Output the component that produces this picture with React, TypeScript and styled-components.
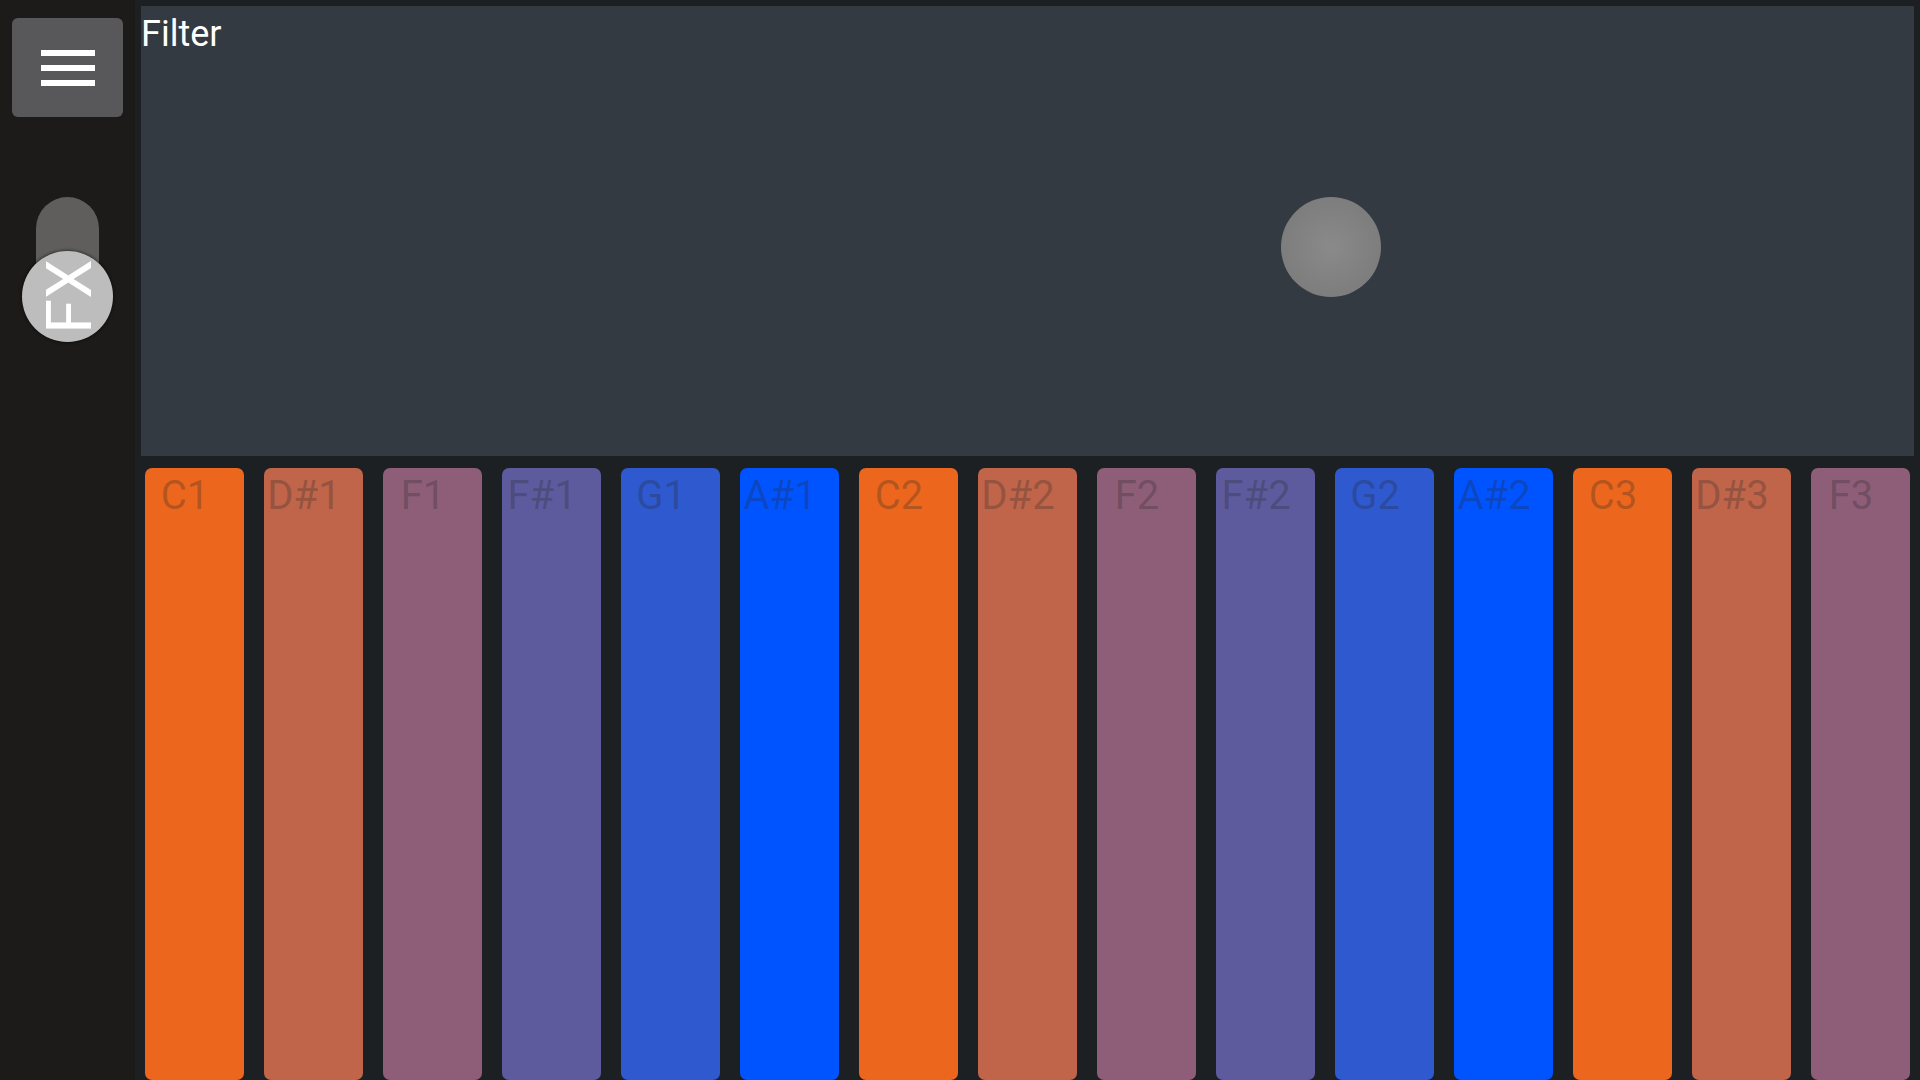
import React from "react";
import styled, { createGlobalStyle } from "styled-components";

const GlobalStyle = createGlobalStyle`
  html, body {
    margin: 0;
    padding: 0;
    background: #1c2023;
    overflow: hidden;
  }
  #root {
    width: 1920px;
    height: 1080px;
  }
  * { box-sizing: border-box; }
`;

const Shell = styled.div`
  display: flex;
  width: 1920px;
  height: 1080px;
  font-family: Roboto, "Noto Sans", "Liberation Sans", sans-serif;
`;

const Sidebar = styled.aside`
  width: 135px;
  flex: 0 0 135px;
  background: #1c1b19;
  display: flex;
  flex-direction: column;
  align-items: center;
  padding-top: 18px;
`;

const MenuButton = styled.button`
  width: 111px;
  height: 99px;
  border: none;
  border-radius: 6px;
  background: #58585a;
  display: flex;
  flex-direction: column;
  align-items: center;
  justify-content: center;
  gap: 9px;
  padding: 0;
  cursor: pointer;
`;

const MenuBar = styled.span`
  display: block;
  width: 54px;
  height: 6px;
  background: #ffffff;
`;

const FxSlider = styled.div`
  position: relative;
  width: 91px;
  height: 144px;
  margin-top: 80px;
  display: flex;
  justify-content: center;
`;

const FxTrack = styled.div`
  width: 63px;
  height: 98px;
  background: #5f5e5d;
  border-radius: 32px 32px 0 0;
`;

const FxThumb = styled.div`
  position: absolute;
  left: 0;
  top: 54px;
  width: 91px;
  height: 91px;
  border-radius: 50%;
  background: #bdbdbd;
  box-shadow: 0 0 3px 1px rgba(0, 0, 0, 0.45);
  display: flex;
  align-items: center;
  justify-content: center;
`;

const FxLabel = styled.span`
  display: inline-block;
  color: #ffffff;
  font-size: 63px;
  line-height: 1;
  transform: rotate(-90deg);
  margin-left: 3px;
`;

const Main = styled.main`
  flex: 1;
  display: flex;
  flex-direction: column;
  background: #1c2023;
  min-width: 0;
`;

const Pad = styled.section`
  position: relative;
  height: 450px;
  margin: 6px 6px 0 6px;
  background: #333a41;
`;

const PadTitle = styled.div`
  color: #ffffff;
  font-size: 36px;
  line-height: 42px;
  padding-top: 7px;
`;

const Puck = styled.div`
  position: absolute;
  width: 100px;
  height: 100px;
  margin: -50px 0 0 -50px;
  border-radius: 50%;
  background: radial-gradient(circle at 50% 50%, #8a8a8a 0%, #7f7f7f 60%, #787878 100%);
`;

const Keys = styled.div`
  flex: 1;
  display: flex;
  margin-top: 12px;
`;

const Key = styled.div<{ $color: string }>`
  flex: 1;
  margin: 0 10px;
  background: ${(p) => p.$color};
  border-radius: 7px;
`;

const KeyLabel = styled.div`
  width: 80px;
  text-align: center;
  white-space: nowrap;
  padding-top: 4px;
  font-size: 40px;
  line-height: 47px;
  color: rgba(40, 40, 40, 0.3);
`;

const NOTE_COLORS: Record<string, string> = {
  C: "#ec671d",
  "D#": "#c0644a",
  F: "#8e5e78",
  "F#": "#5d5b9e",
  G: "#2e59cf",
  "A#": "#0054ff",
};

const keys = [
  ["C", 1],
  ["D#", 1],
  ["F", 1],
  ["F#", 1],
  ["G", 1],
  ["A#", 1],
  ["C", 2],
  ["D#", 2],
  ["F", 2],
  ["F#", 2],
  ["G", 2],
  ["A#", 2],
  ["C", 3],
  ["D#", 3],
  ["F", 3],
] as const;

export default function App() {
  const puck = { x: 0.6712, y: 0.5356 };
  return (
    <>
      <GlobalStyle />
      <Shell>
        <Sidebar>
          <MenuButton aria-label="Menu">
            <MenuBar />
            <MenuBar />
            <MenuBar />
          </MenuButton>
          <FxSlider>
            <FxTrack />
            <FxThumb>
              <FxLabel>FX</FxLabel>
            </FxThumb>
          </FxSlider>
        </Sidebar>
        <Main>
          <Pad>
            <PadTitle>Filter</PadTitle>
            <Puck style={{ left: `${puck.x * 100}%`, top: `${puck.y * 100}%` }} />
          </Pad>
          <Keys>
            {keys.map(([note, oct]) => (
              <Key key={`${note}${oct}`} $color={NOTE_COLORS[note]}>
                <KeyLabel>
                  {note}
                  {oct}
                </KeyLabel>
              </Key>
            ))}
          </Keys>
        </Main>
      </Shell>
    </>
  );
}
